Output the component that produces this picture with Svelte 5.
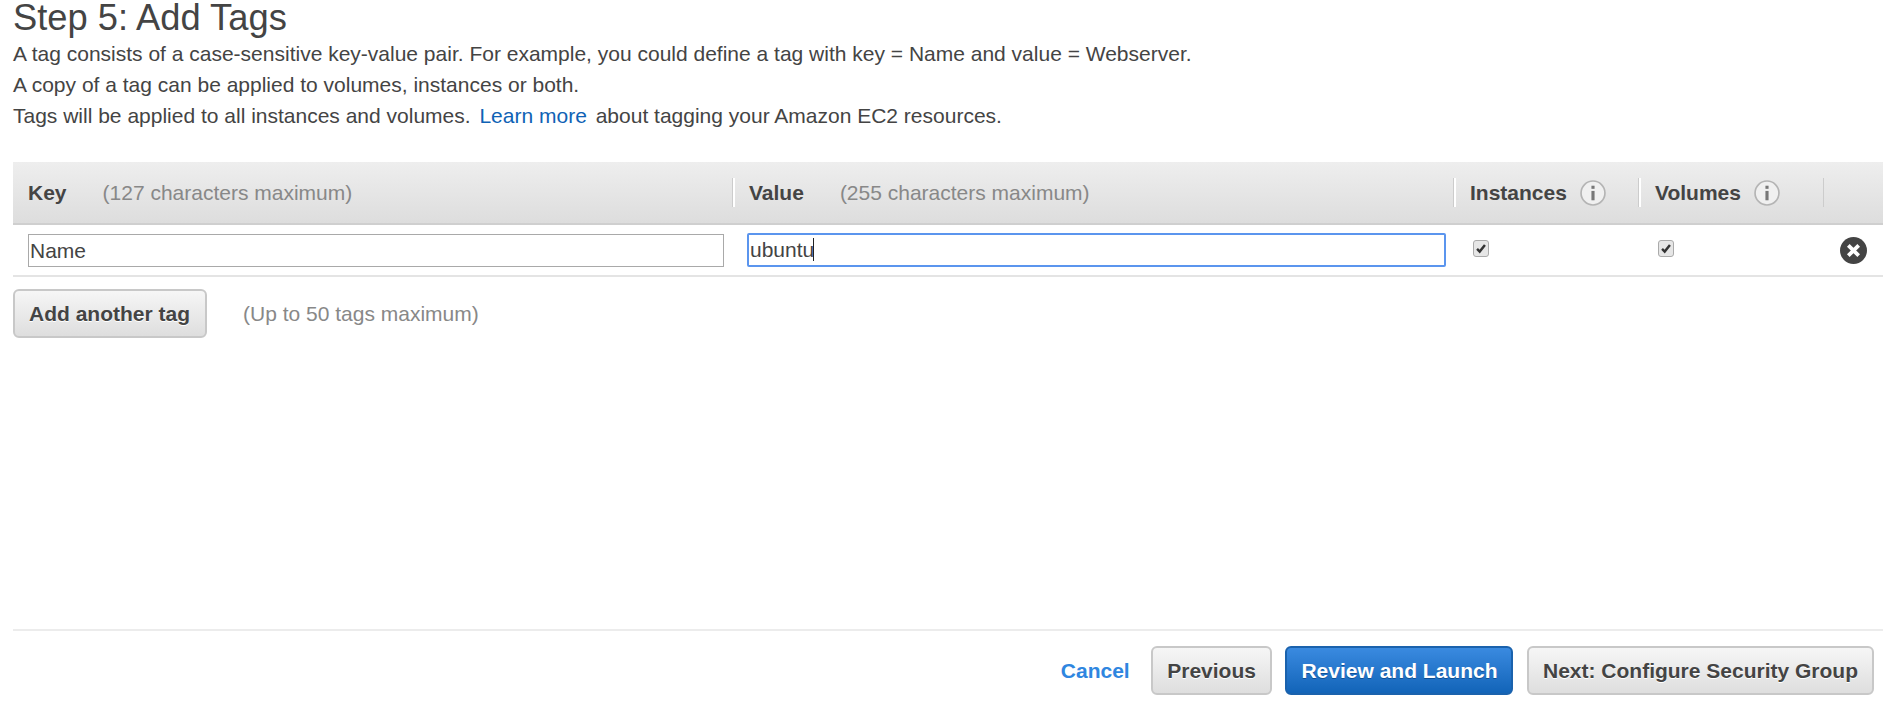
<script>
  let tagKey = $state('Name');
  let tagValue = $state('ubuntu');
  let instances = $state(true);
  let volumes = $state(true);
</script>

{#snippet info()}
  <svg class="info" viewBox="0 0 25 25" aria-hidden="true">
    <circle cx="12.5" cy="12.5" r="11.5" fill="#f0f0f0" stroke="#b4b4b4" stroke-width="1.6" />
    <rect x="11" y="10.5" width="3" height="9" fill="#777" />
    <rect x="11" y="5.5" width="3" height="3" fill="#777" />
  </svg>
{/snippet}

{#snippet check()}
  <span class="check">
    <svg viewBox="0 0 16 17" aria-hidden="true">
      <path d="M3.5 9 L6.5 12 L12.5 4.5" fill="none" stroke="#333" stroke-width="2.8" />
    </svg>
  </span>
{/snippet}

<div class="page">
  <h1>Step 5: Add Tags</h1>
  <div class="intro">
    <p>A tag consists of a case-sensitive key-value pair. For example, you could define a tag with key = Name and value = Webserver.</p>
    <p>A copy of a tag can be applied to volumes, instances or both.</p>
    <p>Tags will be applied to all instances and volumes. <a href="#learn">Learn more</a> about tagging your Amazon EC2 resources.</p>
  </div>

  <div class="tags">
    <div class="head">
      <div class="th"><b>Key</b><span class="hint">(127 characters maximum)</span></div>
      <div class="th"><b>Value</b><span class="hint">(255 characters maximum)</span></div>
      <div class="th short"><b>Instances</b>{@render info()}</div>
      <div class="th short"><b>Volumes</b>{@render info()}</div>
      <div class="th last"></div>
    </div>
    <div class="row">
      <div class="cell key"><input bind:value={tagKey} /></div>
      <div class="cell val">
        <div class="field">
          <input class="focused" bind:value={tagValue} />
          <span class="caret"></span>
        </div>
      </div>
      <div class="cell box">{#if instances}{@render check()}{/if}</div>
      <div class="cell box">{#if volumes}{@render check()}{/if}</div>
      <div class="cell del">
        <svg viewBox="0 0 26 26" aria-hidden="true">
          <circle cx="13" cy="13" r="13" fill="#444" />
          <path d="M8 8 L18 18 M18 8 L8 18" stroke="#fff" stroke-width="3.6" />
        </svg>
      </div>
    </div>
  </div>

  <div class="add">
    <button class="btn wide">Add another tag</button>
    <span class="hint">(Up to 50 tags maximum)</span>
  </div>

  <div class="foot">
    <a class="cancel" href="#cancel">Cancel</a>
    <button class="btn">Previous</button>
    <button class="btn primary">Review and Launch</button>
    <button class="btn">Next: Configure Security Group</button>
  </div>
</div>

<style>
  :global(body) {
    margin: 0;
    background: #fff;
    font-family: "Liberation Sans", Arial, sans-serif;
    color: #444;
  }

  .page {
    padding: 0 10px 0 13px;
    height: 707px;
    box-sizing: border-box;
    overflow: hidden;
    display: flex;
    flex-direction: column;
  }

  h1 {
    margin: 0;
    font-size: 36.3px;
    line-height: 36px;
    font-weight: 400;
  }

  .intro {
    margin-top: 2px;
  }

  .intro p {
    margin: 0;
    font-size: 21px;
    line-height: 31px;
  }

  .intro a {
    color: #0f62b5;
    text-decoration: none;
    margin: 0 3px;
  }

  .tags {
    margin-top: 31px;
  }

  .head,
  .row {
    display: grid;
    grid-template-columns: 719px 721px 185px 185px 1fr;
  }

  .head {
    height: 63px;
    align-items: center;
    background: linear-gradient(#eeeeee, #dddddd);
    border-bottom: 2px solid #cfcfcf;
    box-sizing: border-box;
    font-size: 21px;
  }

  .th {
    display: flex;
    align-items: center;
    height: 29px;
    padding-left: 16px;
    border-left: 1px solid #ccc;
    box-shadow: inset 2px 0 0 #fff;
  }

  .th:first-child {
    padding-left: 15px;
    border-left: 0;
    box-shadow: none;
  }

  .th.last {
    box-shadow: none;
  }

  .th b {
    color: #444;
  }

  .th .hint {
    margin-left: 36px;
  }

  .short {
    gap: 13px;
  }

  .hint {
    color: #888;
    font-size: 21px;
  }

  .row {
    border-bottom: 2px solid #e4e4e4;
    height: 50px;
  }

  .cell {
    padding-top: 9px;
    box-sizing: border-box;
  }

  .key {
    padding-left: 15px;
    padding-right: 8px;
  }

  .val {
    padding-left: 15px;
    padding-right: 7px;
  }

  .field {
    position: relative;
  }

  input {
    display: block;
    width: 100%;
    height: 33px;
    box-sizing: border-box;
    margin: 0;
    padding: 0 1px;
    border: 1px solid #a9a9a9;
    outline: 0;
    font: 21px "Liberation Sans", Arial, sans-serif;
    color: #444;
  }

  input.focused {
    border: 2px solid #5b95ee;
    height: 34px;
    border-radius: 2px;
    padding: 0 1px;
    margin-top: -1px;
  }

  .caret {
    position: absolute;
    left: 66px;
    top: 5px;
    width: 1px;
    height: 23px;
    background: #222;
  }

  .box {
    padding-left: 20px;
    padding-top: 15px;
  }

  .check {
    display: block;
    width: 16px;
    height: 17px;
    box-sizing: border-box;
    border: 1px solid #aaa;
    border-radius: 3px;
    background: #e6e6e6;
  }

  .check svg {
    display: block;
    width: 100%;
    height: 100%;
  }

  .del {
    padding-left: 17px;
    padding-top: 12px;
  }

  .del svg {
    display: block;
    width: 27px;
    height: 27px;
  }

  .info {
    width: 26px;
    height: 26px;
    flex: none;
  }

  .add {
    margin-top: 12px;
    display: flex;
    align-items: center;
    gap: 36px;
  }

  .btn {
    height: 49px;
    padding: 0 14px;
    box-sizing: border-box;
    border: 2px solid #c8c8c8;
    border-radius: 6px;
    background: linear-gradient(#f6f6f6, #dedede);
    color: #444;
    font: bold 21px "Liberation Sans", Arial, sans-serif;
    text-shadow: 0 1px 0 #fff;
    white-space: nowrap;
  }

  .wide {
    padding: 0 15px 0 14px;
  }

  .primary {
    border-color: #1a62ad;
    background: linear-gradient(#3a8ae0, #1264b8);
    color: #fff;
    text-shadow: 0 1px 0 #0e4f94;
  }

  .foot {
    margin-top: auto;
    margin-bottom: 12px;
    border-top: 2px solid #ececec;
    padding: 15px 9px 0 0;
    display: flex;
    justify-content: flex-end;
    align-items: center;
    gap: 13.5px;
  }

  .cancel {
    color: #2f86e0;
    font-weight: 700;
    font-size: 21px;
    text-decoration: none;
    margin-right: 8px;
  }
</style>
